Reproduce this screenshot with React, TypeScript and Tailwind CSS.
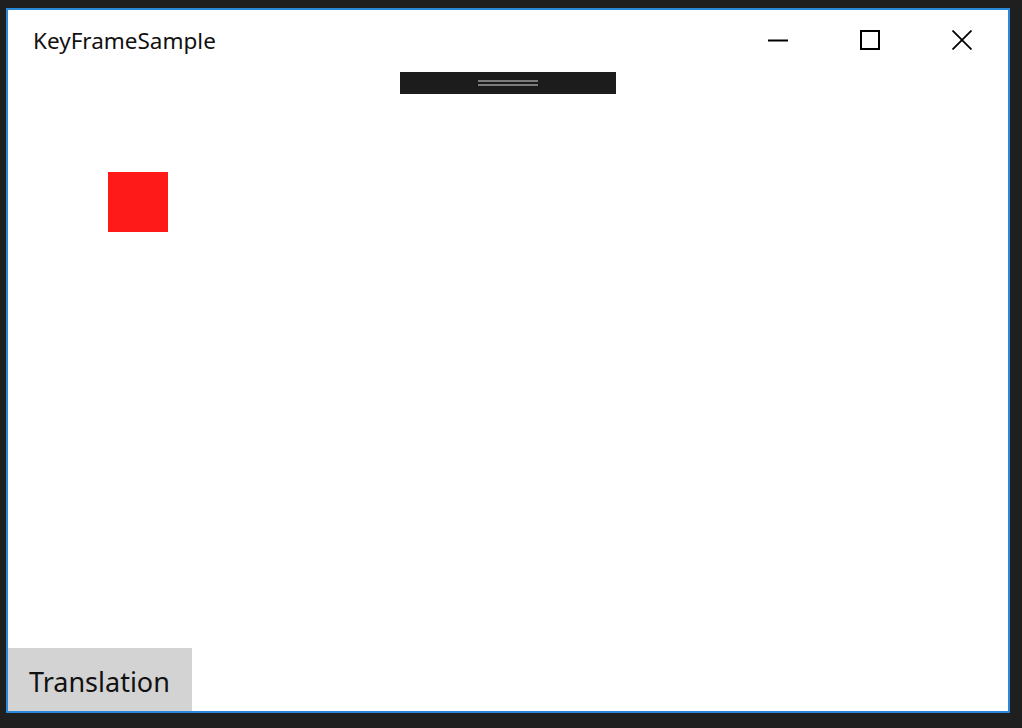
export default function App() {
  const font = {fontFamily: '"Noto Sans", "Open Sans", sans-serif'}
  return (
    <div className="w-[1022px] h-[728px] bg-[#1f1f1f] pt-[8px] pl-[6px]" style={font}>
      <div className="w-[1004px] h-[705px] border-2 border-[#2b8ad8] bg-white flex flex-col">
        {/* title bar */}
        <div className="h-[60px] flex items-center shrink-0">
          <div className="pl-[25px] flex-1 text-[22.5px] text-[#111] leading-none pt-[2px]">KeyFrameSample</div>
          <div className="flex h-full">
            <div className="w-[92px] h-full flex items-center justify-center">
              <svg width="20" height="20" viewBox="0 0 20 20">
                <path d="M0 10.5H20" stroke="#000" strokeWidth="2" />
              </svg>
            </div>
            <div className="w-[92px] h-full flex items-center justify-center">
              <svg width="20" height="20" viewBox="0 0 20 20">
                <rect x="1" y="1" width="18" height="18" fill="none" stroke="#000" strokeWidth="2" />
              </svg>
            </div>
            <div className="w-[92px] h-full flex items-center justify-center">
              <svg width="20" height="20" viewBox="0 0 20 20">
                <path d="M0.5 0.5L19.5 19.5M19.5 0.5L0.5 19.5" stroke="#000" strokeWidth="1.8" />
              </svg>
            </div>
          </div>
        </div>
        {/* drag bar */}
        <div className="flex justify-center mt-[2px] shrink-0">
          <div className="w-[216px] h-[22px] bg-[#1c1c1c] flex flex-col items-center justify-center gap-[2px]">
            <div className="w-[60px] h-[2px] bg-[#7b7b7b]" />
            <div className="w-[60px] h-[2px] bg-[#7b7b7b]" />
          </div>
        </div>
        {/* canvas */}
        <div className="flex-1 flex flex-col">
          <div className="ml-[100px] mt-[78px] w-[60px] h-[60px] bg-[#ff1a1a]" />
          <div className="mt-auto w-[184px] h-[63px] bg-[#d3d3d3] flex items-center pl-[21px] pt-[3px] text-[27px] text-[#111] leading-none">
            Translation
          </div>
        </div>
      </div>
    </div>
  )
}
